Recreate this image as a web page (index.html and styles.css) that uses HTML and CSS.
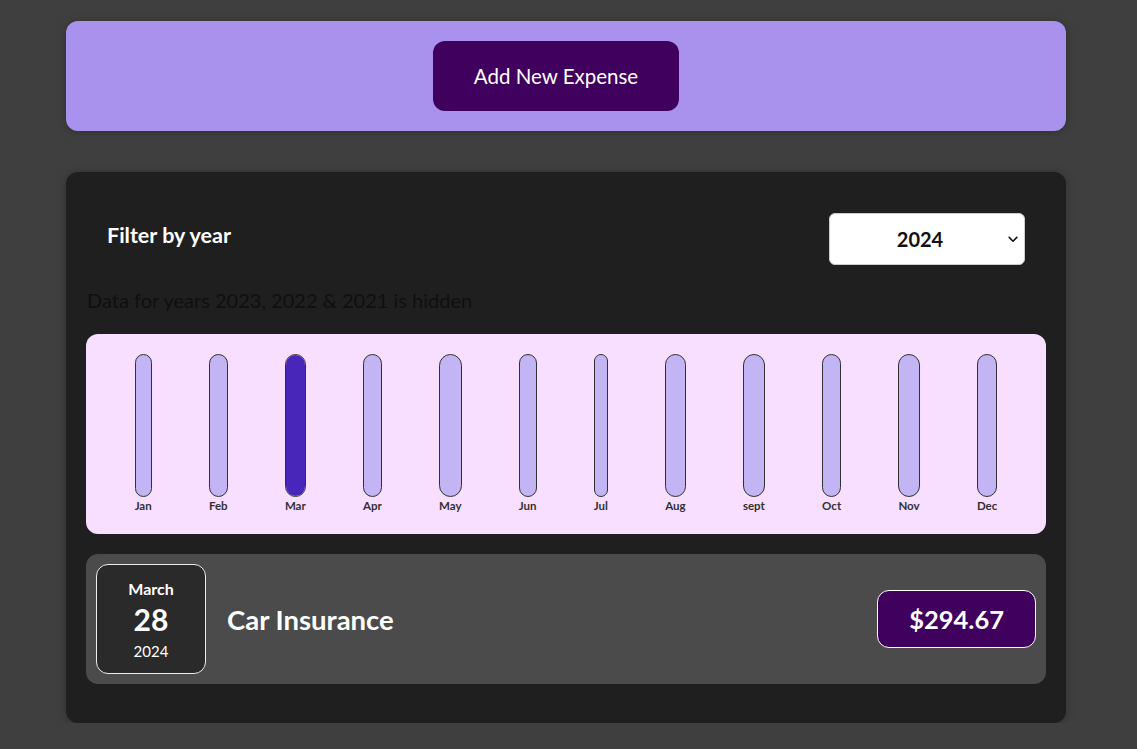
FILE: index.html
```html
<!DOCTYPE html>
<html lang="en">
<head>
<meta charset="utf-8">
<title>Expenses</title>
<link rel="stylesheet" href="styles.css">
</head>
<body>
<div class="app">
  <div class="new-expense">
    <button class="new-expense__btn">Add New Expense</button>
  </div>

  <div class="expenses">
    <div class="filter">
      <label class="filter__label">Filter by year</label>
      <div class="filter__select-wrap">
        <select class="filter__select">
          <option>2024</option>
          <option>2023</option>
          <option>2022</option>
          <option>2021</option>
        </select>
        <svg class="filter__chevron" width="10" height="7" viewBox="0 0 10 7"><path d="M1.2 1.4 L5 5.2 L8.8 1.4" fill="none" stroke="#111" stroke-width="1.6" stroke-linecap="round" stroke-linejoin="round"/></svg>
      </div>
    </div>
    <p class="expenses__hidden">Data for years 2023, 2022 &amp; 2021 is hidden</p>

    <div class="chart">
      <div class="chart-bar"><div class="chart-bar__inner"><div class="chart-bar__fill" style="height:0%"></div></div><div class="chart-bar__label">Jan</div></div>
      <div class="chart-bar"><div class="chart-bar__inner"><div class="chart-bar__fill" style="height:0%"></div></div><div class="chart-bar__label">Feb</div></div>
      <div class="chart-bar"><div class="chart-bar__inner"><div class="chart-bar__fill" style="height:100%"></div></div><div class="chart-bar__label">Mar</div></div>
      <div class="chart-bar"><div class="chart-bar__inner"><div class="chart-bar__fill" style="height:0%"></div></div><div class="chart-bar__label">Apr</div></div>
      <div class="chart-bar"><div class="chart-bar__inner"><div class="chart-bar__fill" style="height:0%"></div></div><div class="chart-bar__label">May</div></div>
      <div class="chart-bar"><div class="chart-bar__inner"><div class="chart-bar__fill" style="height:0%"></div></div><div class="chart-bar__label">Jun</div></div>
      <div class="chart-bar"><div class="chart-bar__inner"><div class="chart-bar__fill" style="height:0%"></div></div><div class="chart-bar__label">Jul</div></div>
      <div class="chart-bar"><div class="chart-bar__inner"><div class="chart-bar__fill" style="height:0%"></div></div><div class="chart-bar__label">Aug</div></div>
      <div class="chart-bar"><div class="chart-bar__inner"><div class="chart-bar__fill" style="height:0%"></div></div><div class="chart-bar__label">sept</div></div>
      <div class="chart-bar"><div class="chart-bar__inner"><div class="chart-bar__fill" style="height:0%"></div></div><div class="chart-bar__label">Oct</div></div>
      <div class="chart-bar"><div class="chart-bar__inner"><div class="chart-bar__fill" style="height:0%"></div></div><div class="chart-bar__label">Nov</div></div>
      <div class="chart-bar"><div class="chart-bar__inner"><div class="chart-bar__fill" style="height:0%"></div></div><div class="chart-bar__label">Dec</div></div>
    </div>

    <ul class="expenses-list">
      <li class="expense-item">
        <div class="expense-date">
          <div class="expense-date__month">March</div>
          <div class="expense-date__day">28</div>
          <div class="expense-date__year">2024</div>
        </div>
        <div class="expense-item__description">
          <h2 class="expense-item__title">Car Insurance</h2>
          <div class="expense-item__price">$294.67</div>
        </div>
      </li>
    </ul>
  </div>
</div>
</body>
</html>
```

FILE: styles.css
```css
* { box-sizing: border-box; }

body {
  margin: 0;
  padding: 0 5px 0 0;
  background: #3f3f3f;
  font-family: "Lato", "Open Sans", sans-serif;
}

.app {
  width: 1000px;
  margin: 0 auto;
  padding-top: 21px;
}

.new-expense {
  background: #a892ee;
  border-radius: 12px;
  padding: 20px;
  text-align: center;
  box-shadow: 0 1px 8px rgba(0, 0, 0, 0.25);
}

.new-expense__btn {
  font-family: inherit;
  font-size: 20.5px;
  color: #fff;
  background: #40005d;
  border: none;
  border-radius: 12px;
  height: 70px;
  width: 246px;
  margin-right: 20px;
  cursor: pointer;
}

.expenses {
  margin-top: 41px;
  background: #1f1f1f;
  border-radius: 12px;
  padding: 20px 20px 39px;
  box-shadow: 0 1px 8px rgba(0, 0, 0, 0.25);
}

.filter {
  display: flex;
  align-items: center;
  justify-content: space-between;
  padding: 0 21px 0 21px;
  margin: 21px 0 21px;
}

.filter__label {
  color: #fff;
  font-weight: 700;
  font-size: 21.5px;
  padding-bottom: 9px;
}

.filter__select-wrap {
  position: relative;
}

.filter__select {
  appearance: none;
  -webkit-appearance: none;
  width: 196px;
  height: 52px;
  font-family: inherit;
  font-size: 20px;
  font-weight: 700;
  color: #111;
  background: #fff;
  border: 1px solid #ccc;
  border-radius: 6px;
  padding: 0 30px 0 16px;
  text-align: center;
  text-align-last: center;
}

.filter__chevron {
  position: absolute;
  right: 7px;
  top: 23px;
}

.expenses__hidden {
  margin: 0 0 20px 1px;
  font-size: 20px;
  line-height: 28px;
  color: #0f0f0f;
}

.chart {
  height: 200px;
  padding: 20px;
  border-radius: 12px;
  background: #f8dfff;
  display: flex;
  justify-content: space-around;
}

.chart-bar {
  height: 100%;
  display: flex;
  flex-direction: column;
  align-items: center;
}

.chart-bar__inner {
  flex: 1;
  width: 100%;
  border: 1px solid #313131;
  border-radius: 12px;
  background: #c3b4f3;
  overflow: hidden;
  display: flex;
  flex-direction: column;
  justify-content: flex-end;
}

.chart-bar__fill {
  background: #4826b9;
  width: 100%;
}

.chart-bar__label {
  font-size: 11.5px;
  font-weight: 700;
  line-height: 17px;
  color: #313131;
  text-align: center;
}

.expenses-list {
  list-style: none;
  margin: 20px 0 0;
  padding: 0;
}

.expense-item {
  display: flex;
  align-items: center;
  background: #4b4b4b;
  border-radius: 12px;
  padding: 10px;
  height: 130px;
}

.expense-date {
  width: 110px;
  height: 110px;
  flex-shrink: 0;
  border: 1px solid #ececec;
  border-radius: 12px;
  background: #2a2a2a;
  color: #fff;
  display: flex;
  flex-direction: column;
  align-items: center;
  justify-content: center;
  padding-top: 2px;
}

.expense-date__month {
  font-size: 16px;
  font-weight: 700;
  line-height: 20px;
}

.expense-date__day {
  font-size: 30px;
  font-weight: 700;
  line-height: 36px;
  margin: 2px 0 4px;
}

.expense-date__year {
  font-size: 15px;
  line-height: 20px;
}

.expense-item__description {
  flex: 1;
  display: flex;
  align-items: center;
  justify-content: space-between;
  margin-left: 21px;
}

.expense-item__title {
  margin: 0;
  font-size: 27.5px;
  font-weight: 700;
  color: #fff;
}

.expense-item__price {
  font-size: 25.5px;
  font-weight: 700;
  color: #fff;
  background: #40005d;
  border: 1px solid #fff;
  border-radius: 12px;
  padding: 12px 31px;
  line-height: 32px;
}
```
